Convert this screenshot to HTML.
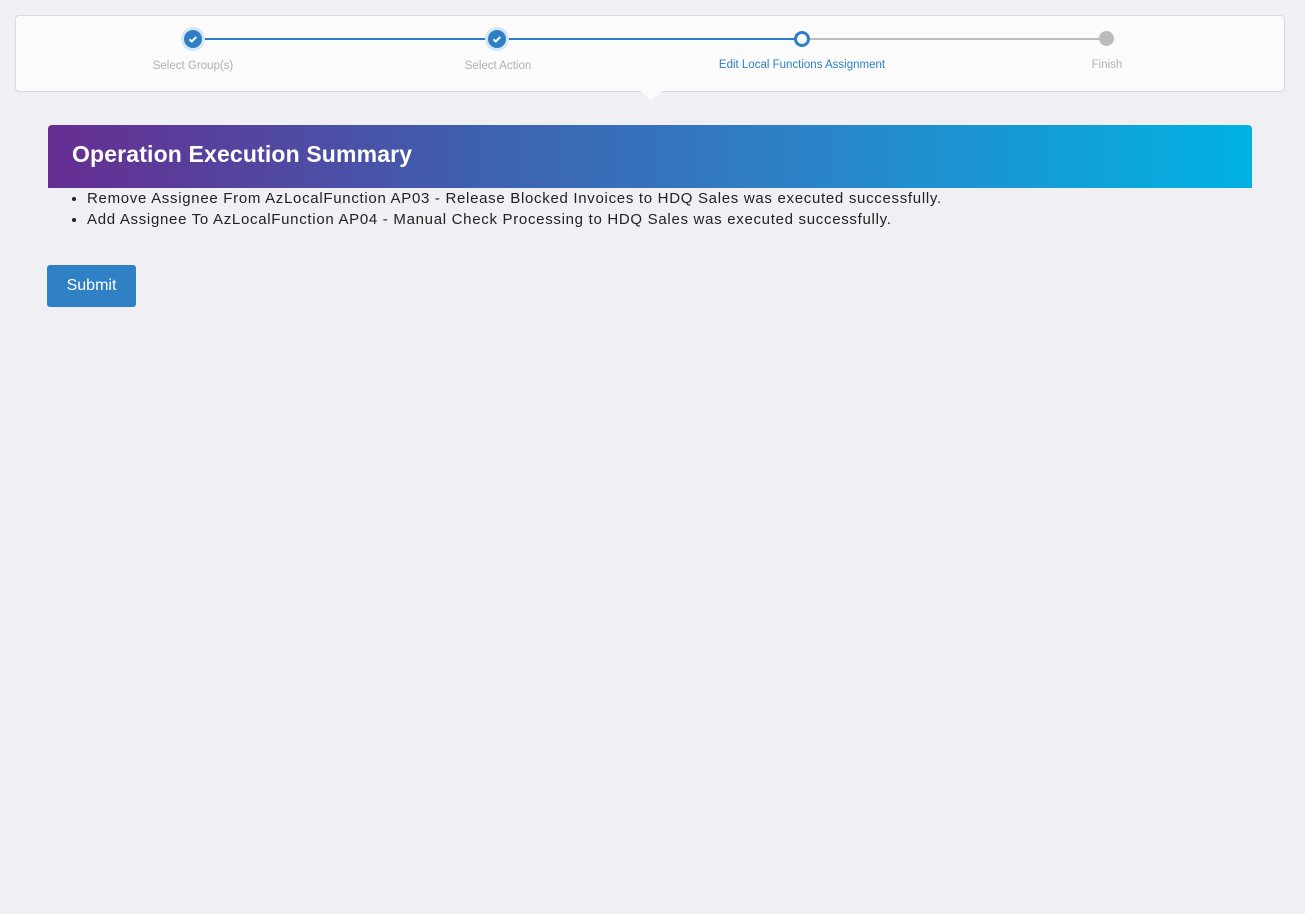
<!DOCTYPE html>
<html><head><style>
html,body{margin:0;padding:0;width:1305px;height:914px;background:#efeff4;font-family:"Liberation Sans",sans-serif;overflow:hidden}
.wiz{position:absolute;left:15px;top:15px;width:1268px;height:75px;background:#fbfbfb;border:1px solid #d9d9e3;border-radius:4px}
.line{position:absolute;top:22px;height:2px}
.dot{position:absolute;top:14px;width:18px;height:18px;border-radius:50%;box-sizing:border-box}
.lbl{position:absolute;top:44px;font-size:11.5px;color:#b0b0b0;transform:translateX(-50%);white-space:nowrap}
.arrow{position:absolute;left:639px;top:90px;width:0;height:0;border-left:12px solid transparent;border-right:12px solid transparent;border-top:11px solid #fbfbfb}
.hdr{position:absolute;left:48px;top:125px;width:1204px;height:63px;border-radius:4px 4px 0 0;background:linear-gradient(90deg,#662d91 0%,#3f5faf 35%,#2f7fc4 60%,#00b2e3 100%)}
.hdr h1{margin:0;position:absolute;left:24px;top:16px;color:#fff;font-size:23px;font-weight:bold;letter-spacing:0.15px}
ul{position:absolute;left:48px;top:188px;margin:0;padding:0 0 0 39px;font-size:15px;color:#222;line-height:21px;letter-spacing:0.7px}
.btn{position:absolute;left:47px;top:265px;width:89px;height:42px;background:#2f80c4;border-radius:3px;color:#fff;font-size:16px;line-height:42px;text-align:center}
</style></head><body>
<div class="wiz">
<div class="line" style="left:177px;width:610px;background:#2f7fc4"></div>
<div class="line" style="left:787px;width:304px;background:#bbb"></div>
<div class="dot" style="left:168px;background:#2f7fc4;box-shadow:0 0 0 3px #d7e6f3"><svg width="18" height="18" viewBox="0 0 18 18"><path d="M5.5 9.3l2.3 2.2 4.5-4.6" stroke="#fff" stroke-width="2" fill="none"/></svg></div>
<div class="dot" style="left:472px;background:#2f7fc4;box-shadow:0 0 0 3px #d7e6f3"><svg width="18" height="18" viewBox="0 0 18 18"><path d="M5.5 9.3l2.3 2.2 4.5-4.6" stroke="#fff" stroke-width="2" fill="none"/></svg></div>
<div class="dot" style="left:778px;top:15px;width:16px;height:16px;background:#fff;border:3px solid #2f7fc4"></div>
<div class="dot" style="left:1083px;top:15px;width:15px;height:15px;background:#bbb"></div>
<div class="lbl" style="left:177px;top:44px">Select Group(s)</div>
<div class="lbl" style="left:482px;top:44px">Select Action</div>
<div class="lbl" style="left:786px;top:43px;color:#2f7fc4">Edit Local Functions Assignment</div>
<div class="lbl" style="left:1091px;top:43px">Finish</div>
</div>
<div class="arrow"></div>
<div class="hdr"><h1>Operation Execution Summary</h1></div>
<ul>
<li>Remove Assignee From AzLocalFunction AP03 - Release Blocked Invoices to HDQ Sales was executed successfully.</li>
<li>Add Assignee To AzLocalFunction AP04 - Manual Check Processing to HDQ Sales was executed successfully.</li>
</ul>
<div class="btn">Submit</div>
</body></html>
